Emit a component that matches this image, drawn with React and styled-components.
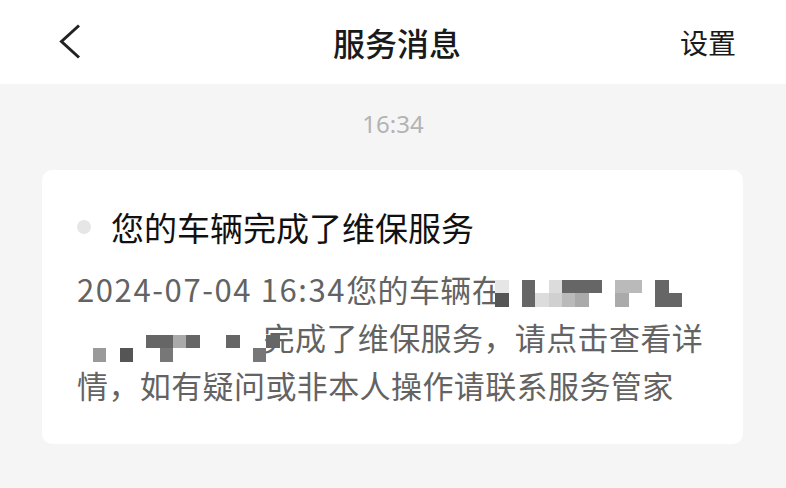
import React from "react";
import styled, { createGlobalStyle } from "styled-components";

const GlobalStyle = createGlobalStyle`
	html, body {
		margin: 0;
		padding: 0;
		background: #f5f5f5;
	}
	body {
		font-family: "Noto Sans CJK SC", "Noto Sans", sans-serif;
	}
	* {
		box-sizing: border-box;
	}
`;

//Styled components
const Page = styled.div`
	width: 786px;
	min-height: 488px;
	background: #f5f5f5;
	display: flex;
	flex-direction: column;
`;

const Header = styled.header`
	height: 84px;
	background: #fff;
	display: grid;
	grid-template-columns: 1fr auto 1fr;
	align-items: center;
	padding: 0 50px 0 58px;
`;

const BackButton = styled.button`
	justify-self: start;
	border: none;
	background: none;
	padding: 0;
	width: 26px;
	height: 36px;
	display: flex;
	align-items: center;
	cursor: pointer;
`;

const HeaderTitle = styled.h1`
	margin: 0;
	font-size: 32px;
	font-weight: 500;
	color: #1a1a1a;
	line-height: 40px;
`;

const HeaderAction = styled.span`
	justify-self: end;
	font-size: 28px;
	color: #1a1a1a;
	line-height: 36px;
`;

const TimeStamp = styled.div`
	text-align: center;
	font-size: 24px;
	line-height: 30px;
	color: #b3b3b3;
	margin: 25px 0 31px;
	font-family: "Noto Sans", sans-serif;
`;

const Card = styled.section`
	margin: 0 43px 0 42px;
	background: #fff;
	border-radius: 10px;
	padding: 33px 35px 35px;
`;

const CardTitle = styled.div`
	display: flex;
	align-items: center;
	gap: 20px;
	font-size: 33px;
	line-height: 48px;
	color: #111;
`;

const Dot = styled.span`
	width: 14px;
	height: 14px;
	border-radius: 50%;
	background: #e6e6e6;
	flex-shrink: 0;
`;

const Body = styled.p`
	margin: 14px 0 0;
	font-size: 31px;
	line-height: 48px;
	letter-spacing: 0.4px;
	color: #636363;
`;

const DateText = styled.span`
	letter-spacing: 1.6px;
`;

const MosaicBox = styled.span`
	display: inline-grid;
	grid-template-columns: repeat(${(p) => p.$cols}, 13.33px);
	grid-auto-rows: 13.33px;
	vertical-align: top;
	position: relative;
	top: ${(p) => p.$top}px;
	margin-left: ${(p) => p.$ml || 0}px;
	margin-right: ${(p) => p.$mr || 0}px;
`;

const Cell = styled.span`
	background: ${(p) => p.$c || "transparent"};
`;

// mosaic rows: strings of cell codes, "." = blank
const shades = {
	a: "#e6e6e6",
	b: "#dcdcdc",
	c: "#d0d0d0",
	d: "#bababa",
	e: "#aaaaaa",
	f: "#9a9a9a",
	g: "#777777",
	h: "#666666",
	i: "#555555",
	w: "#ffffff",
};

const Mosaic = ({ rows, top, ml, mr }) => {
	const cols = rows[0].length;
	return (
		<MosaicBox $cols={cols} $top={top} $ml={ml} $mr={mr}>
			{rows.join("").split("").map((k, i) => (
				<Cell key={i} $c={shades[k]} />
			))}
		</MosaicBox>
	);
};

const lineOne = [".awh.bhhh.dd.h.", ".iwhbcde..e..hh"];
const lineTwo = ["....hheh..h..h", "f.i..g......g."];

//JSX
export default function App() {
	return (
		<Page>
			<GlobalStyle />
			<Header>
				<BackButton aria-label="返回">
					<svg width="24" height="36" viewBox="0 0 24 36">
						<path
							d="M21 1.5 L3.5 17.5 L21 33.5"
							fill="none"
							stroke="#222"
							strokeWidth="3"
						/>
					</svg>
				</BackButton>
				<HeaderTitle>服务消息</HeaderTitle>
				<HeaderAction>设置</HeaderAction>
			</Header>

			<TimeStamp>16:34</TimeStamp>

			<Card>
				<CardTitle>
					<Dot />
					您的车辆完成了维保服务
				</CardTitle>
				<Body>
					<DateText>2024-07-04 16:34</DateText>您的车辆在
					<Mosaic rows={lineOne} top={15} ml={-21} />
					<br />
					<Mosaic rows={lineTwo} top={22} ml={16} mr={-16} />
					完成了维保服务，请点击查看详情，如有疑问或非本人操作请联系服务管家
				</Body>
			</Card>
		</Page>
	);
}
